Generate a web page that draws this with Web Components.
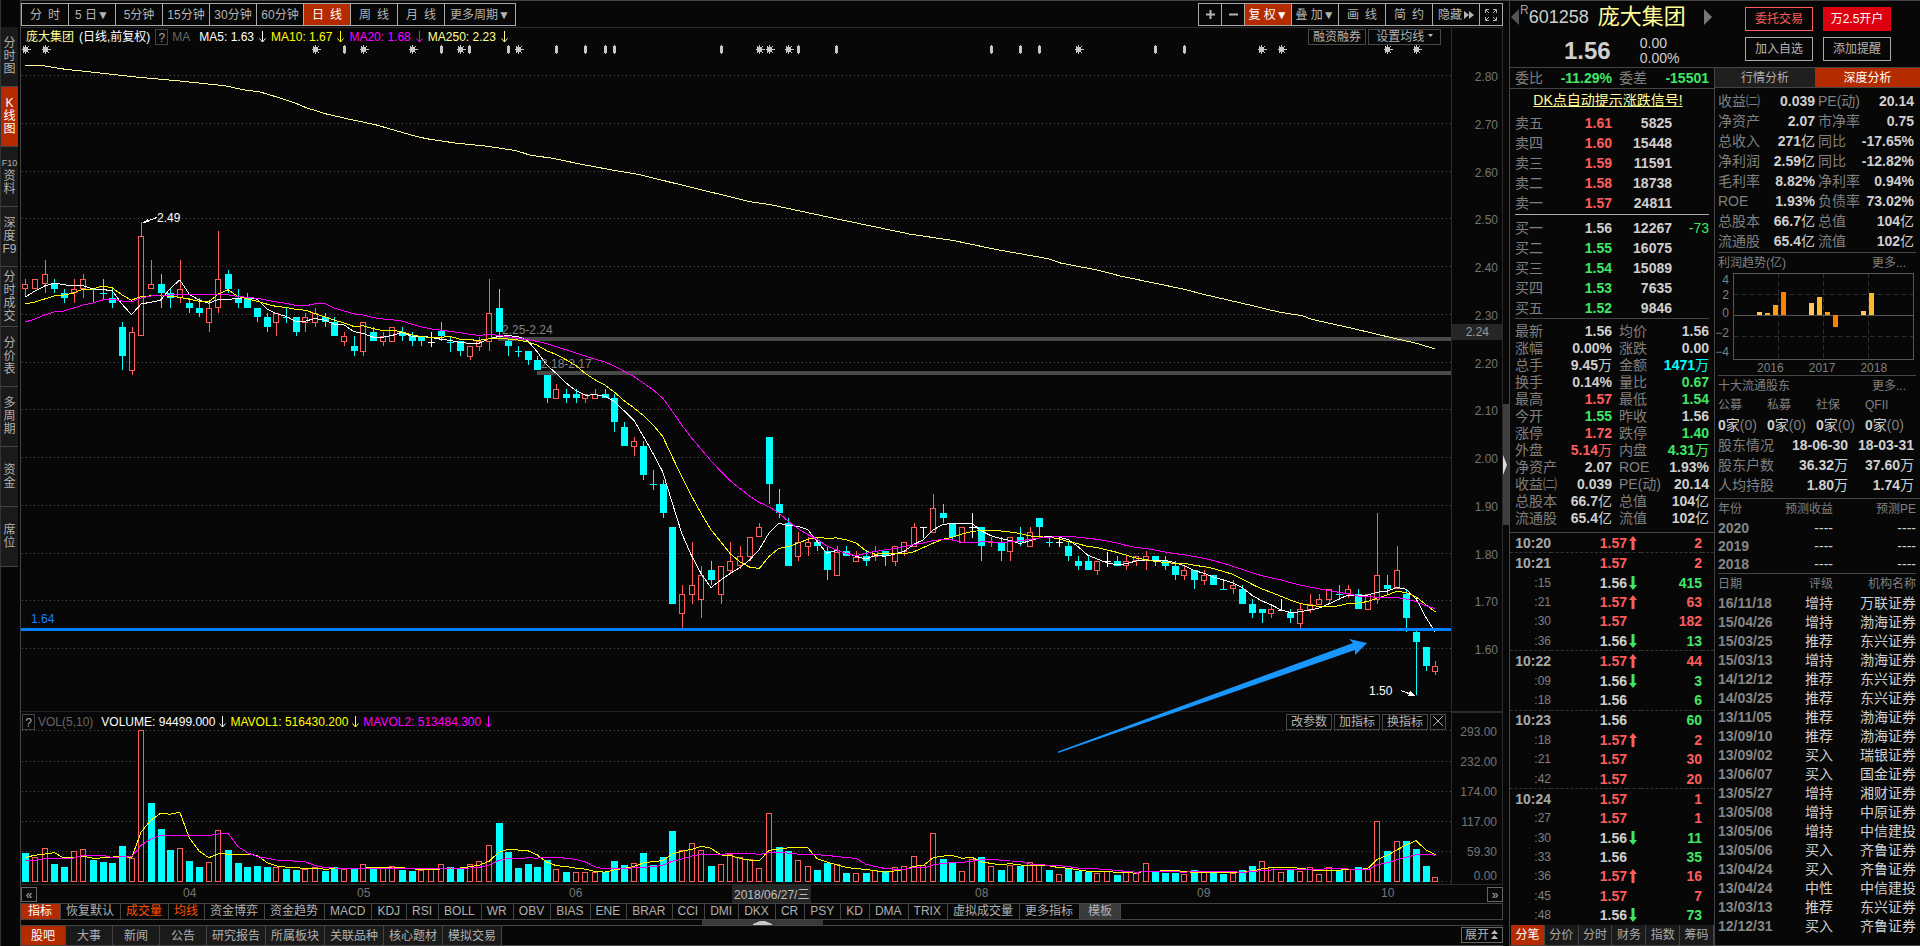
<!DOCTYPE html>
<html lang="zh-CN">
<head>
<meta charset="utf-8">
<title>庞大集团 601258</title>
<style>
html,body{margin:0;background:#070707}
body{font:12px/16px "Liberation Sans","Noto Sans CJK SC",sans-serif;color:#a8a8a8;
--bg:#070707;--line:#3c3c3c;--dim:#808080;--txt:#cfcfcf;--hot:#b42b00;--up:#ff5c5c;--down:#3fe765;--cy:#00ffff;--cream:#ffff99}
</style>
</head>
<body>
<trade-terminal></trade-terminal>
<script>
const BASE = `
*{box-sizing:border-box}
button{font:inherit;color:inherit;background:none;border:0;margin:0;padding:0;white-space:nowrap;cursor:pointer}
a{color:inherit}
table{border-collapse:collapse;width:100%;table-layout:fixed}
th,td{padding:0;font-weight:inherit;text-align:left;white-space:nowrap}
.n{text-align:right;font-weight:bold;color:var(--txt)}
.n i{font-style:normal;font-weight:normal}
.up{color:var(--up)}.dn{color:var(--down)}.cy{color:var(--cy)}
`;
function define(name, css, render) {
  customElements.define(name, class extends HTMLElement {
    constructor() {
      super();
      const root = this.attachShadow({mode: 'open'});
      const tpl = document.createElement('template');
      tpl.innerHTML = `<style>${BASE}${css}</style>${render(this)}`;
      root.append(tpl.content.cloneNode(true));
    }
  });
}
const unit = s => s.replace(/([万亿])/g, '<i>$1</i>');

define('side-nav', `
:host{display:block;background:#070707;padding-top:27px;border-left:1px solid #333}
button{display:flex;width:17px;height:60px;align-items:center;justify-content:center;background:#1a1a1a;border-bottom:1px solid #444;line-height:13px;text-align:center;color:#b0b0b0;white-space:normal}
span{display:block}
.f{font-size:9px}
.on{background:var(--hot);color:#fff}
`, () => ['分 时 图','K 线 图','F10 资 料','深 度 F9','分 时 成 交','分 价 表','多 周 期','资 金','席 位']
  .map((t, i) => `<button class="${i == 1 ? 'on' : ''}"><b style="font-weight:normal">${t.split(' ').map(c => `<span class="${c == 'F10' ? 'f' : ''}">${c}</span>`).join('')}</b></button>`).join(''));

define('tool-bar', `
:host{display:flex;justify-content:space-between;height:28px;padding-top:2px;border-top:1px solid #444;border-bottom:1px solid #2a2a2a}
div{display:flex;height:23px;border:1px solid #aaa;border-right:0}
button{min-width:47px;border-right:1px solid #aaa;color:#b4b4b4}
.s{min-width:23px;font-size:16px}
.w{padding:0 5px}
.on{background:var(--hot);color:#fff}
svg{display:block;margin:auto}
.hd{display:flex;align-items:center;justify-content:center;gap:2px}.hd svg{margin:0}
`, () => `<div>${['分&ensp;时','5 日▼','5分钟','15分钟','30分钟','60分钟','日&ensp;线','周&ensp;线','月&ensp;线'].map((t, i) => `<button class="${i == 6 ? 'on' : ''}">${t}</button>`).join('')}<button class="w">更多周期▼</button></div>
<div><button class="s" aria-label="放大"><svg width="9" height="9"><path d="M4.500 0v9M0 4.500h9" stroke="#b4b4b4" stroke-width="2"/></svg></button><button class="s" aria-label="缩小"><svg width="9" height="9"><path d="M0 4.500h9" stroke="#b4b4b4" stroke-width="2"/></svg></button><button class="on">复 权▼</button><button>叠 加▼</button><button>画&ensp;线</button><button>简&ensp;约</button><button class="hd">隐藏<svg width="10" height="8"><path d="M0 0l5 4-5 4zM5 0l5 4-5 4z" fill="#b4b4b4"/></svg></button><button class="s" aria-label="全屏"><svg width="12" height="12" fill="none" stroke="#b4b4b4"><path d="M.5 4V.5H4M8 .5h3.500V4M.5 8v3.500H4M8 11.500h3.500V8M1 1l3 3M11 1L8 4M1 11l3-3M11 11L8 8"/></svg></button></div>`);

/* Each candle: colour, high, body top, body bottom, low. */
const K = `r279,284,289,297 r279,279,289,289 r260,274,284,293 c279,284,289,293 c289,293,298,303 r279,289,293,303 r274,279,289,298 c289,289,289,302 c279,293,293,298 c289,298,303,308
c322,327,356,370 r327,332,371,375 r222,236,336,336 r260,284,289,289 c274,284,293,308 c289,293,298,308 r260,289,298,303 c298,303,308,313 c298,308,313,317 r300,308,323,332
r231,279,308,313 c270,274,289,293 c289,298,303,308 c293,298,308,308 c308,308,317,322 c313,317,327,332 r313,313,323,336 c308,317,317,322 c317,317,332,336 r313,317,323,332
r308,313,323,327 c313,317,322,327 c317,322,336,336 r332,336,342,346 c336,346,351,356 r322,322,352,356 c327,332,341,341 r332,336,342,346 r327,327,342,342 c327,332,336,341
c332,336,341,346 c336,336,341,346 w332,342,342,346 c322,331,336,341 c336,342,342,351 c341,341,351,356 r346,346,357,360 r337,341,347,351 r279,313,342,351 c289,308,332,336
c340,341,346,356 c346,351,351,356 c351,351,360,365 c356,360,370,370 c375,375,398,403 r384,389,399,399 c389,394,398,403 c389,394,398,403 r394,394,399,403 r389,394,399,399
c389,394,398,398 c394,398,422,432 c422,427,446,446 r437,441,447,456 c441,446,475,480 c470,484,484,489 c480,484,513,518 c527,527,604,604 r585,594,614,628 r542,585,595,604
r566,575,600,618 c561,570,580,585 r566,566,595,604 r542,561,571,574 r546,556,566,569 r537,537,557,561 r523,527,537,537 c437,437,484,504 c489,504,513,518 c518,523,566,566
r532,542,557,561 r537,542,547,556 c537,542,546,551 c546,551,570,580 r546,552,576,576 c546,551,556,556 r551,557,562,562 c551,556,561,566 r546,551,557,561 c551,551,556,566
r546,546,562,566 r542,542,552,556 r523,527,547,547 w527,527,527,537 r494,508,533,533 c504,513,518,523 c523,523,537,541 r527,527,543,543 w513,527,527,537 c527,527,546,561
r537,542,542,546 c537,542,551,561 r537,537,552,561 c527,537,542,546 r527,532,547,547 c518,518,527,537 c537,542,542,546 w537,542,542,546 c541,546,556,561 c556,561,566,570
c556,561,570,570 r561,561,571,575 w552,561,561,566 c556,561,566,566 r556,561,566,570 r556,556,561,566 r551,556,561,570 c556,556,561,566 c556,561,566,570 c561,566,575,580
r566,570,576,580 c570,570,580,589 r570,575,581,585 c575,575,585,585 c580,589,589,589 r580,585,589,594 c585,589,604,604 c599,604,613,618 c609,609,613,623 r604,609,614,618
w599,610,610,610 c609,613,618,623 r604,609,624,628 r594,604,610,613 r594,599,605,605 r589,589,600,604 c585,594,594,599 r585,589,594,598 c589,594,609,609 r594,594,610,610
r513,575,600,604 c575,585,589,594 r546,570,589,589 c589,594,618,632 c631,632,642,695 c647,647,666,671 r661,666,672,675`.split(/\s+/).map(s => [s[0], ...s.slice(1).split(',').map(Number)]);
/* Volume bars: colour and height in thirds of a pixel below the panel's top. */
const V = `c460 r472 r445 c492 c501 r454 r448 c480 c486 c489 c438 r475 r91 c310 c387 c450 r445 c483 c501 r487 r391 c450 c489 c501 c498 c501 r500 c507 c510 r508 r500 c513 c501 r507 c507 r493 c507 r505 r499 c510 c513 r511 r508 r493 c501 c507 r493 r484 r436 c369 c457 c504 c492 c501 c480 r508 c516 r517 r517 r515 c516 c483 c495 r490
c460 c495 c471 c393 r451 r430 r451 c498 r493 r462 r472 r478 r505 r340 c441 c453 r481 r499 c510 c489 r493 c519 r520 c519 r511 c513 r502 r499 r469 r496 r400 c477 c489 r514 r478 c471 r499 c510 r496 c498 r487 r496 c510 r523 c507 c513 c516 r520 r514 c525 r517 r520 r490 c516 c519 c519 r523 c510 r514 c517 c522 r520 c510 c498 r484 r502
r515 c510 r514 r502 r523 r502 c511 r506 c501 r508 r364 c453 r424 c423 c447 c498 r532`.split(/\s+/).map(s => [s[0], 700 + s.slice(1) / 3]);
const COL = {r: '#ff5c5c', c: '#00ffff', w: '#ffffff'};
const X = i => 25.3 + 9.658 * i;
function avg(vals, n, head) {
  return vals.map((v, i) => {
    const y = i < head.length ? head[i] : vals.slice(Math.max(0, i - n + 1), i + 1).reduce((a, b) => a + b) / Math.min(n, i + 1);
    return X(i).toFixed(1) + ',' + y.toFixed(1);
  }).join(' ');
}
function plot() {
  let s = '';
  for (let i = 0; i < 13; i++) s += `<path class="g" d="M22 ${Math.round(75 + i * 47.76) + .5}H1451"/>`;
  for (const y of [730, 761, 791, 821, 851, 881]) s += `<path class="g" d="M22 ${y + .5}H1451"/>`;
  s += '<path stroke="#4a4a4a" stroke-width="4" d="M498 339H1451M537 373H1451"/>';
  K.forEach(([c, h, t, b, l], i) => {
    const x = Math.round(X(i)), k = COL[c];
    if (b - t < 3) s += `<path stroke="${k}" d="M${x + .5} ${h}V${l + 1}M${x - 3} ${t + .5}H${x + 4}"/>`;
    else if (c == 'c') s += `<path stroke="${k}" d="M${x + .5} ${h}V${l}"/><rect x="${x - 3}" y="${t}" width="7" height="${b - t}" fill="${k}"/>`;
    else s += `<path stroke="${k}" fill="none" d="M${x + .5} ${h}V${t}M${x + .5} ${b}V${l}M${x - 2.5} ${t + .5}H${x + 2.5}V${b - .5}H${x - 2.5}z"/>`;
  });
  V.forEach(([c, y], i) => {
    const x = Math.round(X(i)), t = Math.round(y);
    s += c == 'c' ? `<rect x="${x - 3}" y="${t}" width="7" height="${882 - t}" fill="#0ff"/>` :
      `<rect x="${x - 2.5}" y="${t + .5}" width="5" height="${881 - t}" fill="#070707" stroke="#ff5c5c"/>`;
  });
  const close = K.map(k => k[0] == 'c' ? k[3] : k[2]), vol = V.map(v => v[1]);
  const z = a => a.map(v => 700 + v / 3);
  s += `<polyline stroke="#fff" points="${avg(close, 5, [297, 291, 286, 283])}"/>
<polyline stroke="#ff0" points="${avg(close, 10, [304, 302, 299, 296, 295, 293, 289, 289, 286])}"/>
<polyline stroke="#f0f" points="${avg(close, 20, [322, 319, 315, 312, 311, 308, 305, 303, 300, 299, 301, 302, 298, 296, 295, 295, 294, 294, 295])}"/>
<polyline stroke="#ff0" points="${avg(vol, 5, z([472, 466, 462, 458]))}"/>
<polyline stroke="#f0f" points="${avg(vol, 10, z([481, 481, 476, 475, 474, 474, 466, 466, 466]))}"/>`;
  const long = [[[62,196,98,196,130,202,160,208,230,217,325,230,440,243,550,257,600,270,635,275,670,288,725,310,750,323,800,342,850,356,920,374,1010,406,1045,416,1115,429,1195,439,1265,452,1300,466,1350,474,1430,494,1500,510], 0, 2.45],
    [[0,524,95,553,270,605,320,614,480,656,660,702,770,722,870,748,1000,776,1030,789,1120,810,1180,829,1330,867,1380,883,1480,911,1568,937], 640, 2.45], [[185,947,205,958,290,983,394,1016,440,1030,482,1047], 1220, 2.24]];
  s += '<polyline stroke="#ffff99" points="' + long.map(([a, o, k]) => a.map((v, i) => i % 2 ? (v / 3).toFixed(1) : (o + v / k).toFixed(1)).join(' ')).join(' ') + '"/>';
  const sun = [25.5,45.5,315.5,363.5,412.5,460.5,518.5,759.5,769.5,788.5,1078.5,1261.5,1281.5,1387.5,1416.5];
  const dia = [344.5,441.5,469.5,508.5,556.5,585.5,605.5,614.5,721.5,798.5,836.5,991.5,1020.5,1039.5,1155.5,1184.5];
  for (const x of sun) s += `<path stroke="#c8c8c8" d="M${x} 45v9M${x - 4} 49.500h9M${x - 3} 46.500h1M${x + 2} 46.500h1M${x - 3} 52.500h1M${x + 2} 52.500h1"/><rect x="${x - 2.5}" y="47" width="5" height="5" fill="#c8c8c8"/>`;
  for (const x of dia) s += `<path stroke="#c8c8c8" d="M${x} 45v9"/><path stroke="#c8c8c8" stroke-width="3" d="M${x} 46v7"/>`;
  s += `<path stroke="#0080ff" stroke-width="3" d="M21 629.500H1451"/>
<path stroke="#222" d="M21 711.500H1451"/>
<path stroke="#fff" d="M157 217.500L143 222.500M1401 690.500l13 5"/><path fill="#fff" d="M143 223l5-5 1 4zM1415 696l-5-5-2 5z"/>
<path shape-rendering="auto" fill="#1a96ff" d="M1058 751.500L1353 643l-4-4 18 4-12 12v-5L1058 753z"/>`;
  return s;
}
const down = c => `<svg class="a" width="7" height="12" fill="none" stroke="${c}"><path d="M3.500 0v11M.5 7.500l3 3.500 3-3.500"/></svg>`;
const at = (x, y) => `left:${((x - 21) / 14.3).toFixed(3)}%;top:${((y - 28) / 8.56).toFixed(3)}%`;

define('kline-chart', `
:host{display:grid;grid-template:minmax(0,1fr) 19px/minmax(0,1fr) 52px;min-height:0}
.plot{position:relative;min-height:0}
.plot>svg{display:block;width:100%;height:100%;position:absolute;inset:0;fill:none;shape-rendering:crispEdges}
.g{stroke:#505050;stroke-dasharray:1 3}
.note{position:absolute;line-height:14px;color:#fff}
.leg{position:absolute;display:flex;gap:5px;align-items:center;left:5px;height:16px;color:#fff;white-space:nowrap}
.leg.v{left:1px;gap:4px}
.q{width:13px;height:16px;border:1px solid #444;color:#aaa;margin-right:-1px}
.first{margin-left:4px}
.d{color:#666}.y{color:#ff0}.m{color:#f0f}.c{color:var(--cream)}
.btns{position:absolute;display:flex;gap:2px;height:16px}
.btns button{border:1px solid #484848;padding:0 4px;line-height:14px;color:#b4b4b4}
.top{right:10px;top:1px}.btns .x{padding:0 2px}
.axis{display:grid;grid-template-rows:minmax(0,683fr) minmax(0,173fr);border-left:1px solid #2a2a2a;border-right:1px solid #2a2a2a;color:#757575;text-align:right}
.pa{padding:41px 4px 53px 0;display:flex;flex-direction:column;justify-content:space-between;position:relative}
.pa b{position:absolute;left:0;right:0;top:43.400%;height:16px;background:#262626;font-weight:normal;color:#999;padding-right:13px}
.va{border-top:2px solid #2a2a2a;padding:4px 5px 0 0;display:flex;flex-direction:column}
.va span{flex:30 1 0;display:flex;align-items:center;justify-content:flex-end}.va span:last-child{flex-grow:17}
.dates{display:grid;grid-template-columns:162fr 174fr 212fr 163fr 243fr 222fr 184fr 70fr;border-top:1px solid #2a2a2a;color:#757575;line-height:16px}
.dates span{white-space:nowrap}
.dates b{font-weight:normal;background:#262626;color:#c0c0c0;padding:2px 2px 0;display:inline-block}
.pg{width:16px;height:15px;border:1px solid #666;margin-top:2px;display:block;color:#b4b4b4;line-height:10px}
.end{border-top:1px solid #2a2a2a;display:flex;justify-content:flex-end}
`, () => `<div class="plot"><svg viewBox="21 28 1430 856" preserveAspectRatio="none">${plot()}</svg>
<div class="leg" style="top:1px"><span class="c">庞大集团</span><span>(日线,前复权)</span><button class="q">?</button><span class="d">MA</span><span class="first">MA5: 1.63</span>${down('#fff')}<span class="y">MA10: 1.67</span>${down('#ff0')}<span class="m">MA20: 1.68</span>${down('#f0f')}<span class="c">MA250: 2.23</span>${down('#ff9')}</div>
<div class="btns top"><button>融资融券</button><button>&nbsp;设置均线 <svg width="5" height="7"><path d="M0 0h5L2.500 3z" fill="#bbb"/></svg>&nbsp;</button></div>
<span class="note" style="${at(157, 211)}">2.49</span>
<span class="note" style="${at(1369, 684)}">1.50</span>
<span class="note d" style="${at(502, 323)};color:#808080">2.25-2.24</span>
<span class="note d" style="${at(541, 357)};color:#808080">2.18-2.17</span>
<span class="note" style="${at(31, 612)};color:#1080ff">1.64</span>
<div class="leg v" style="top:80.100%"><button class="q">?</button><span class="d">VOL(5,10)</span><span class="first">VOLUME: 94499.000</span>${down('#fff')}<span class="y">MAVOL1: 516430.200</span>${down('#ff0')}<span class="m">MAVOL2: 513484.300</span>${down('#f0f')}</div>
<div class="btns" style="right:5px;top:80.100%"><button>改参数</button><button>加指标</button><button>换指标</button><button class="x" aria-label="关闭"><svg width="10" height="10" stroke="#b4b4b4"><path d="M0 0l10 10M10 0L0 10"/></svg></button></div>
</div>
<div class="axis"><div class="pa">${['2.80','2.70','2.60','2.50','2.40','2.30','2.20','2.10','2.00','1.90','1.80','1.70','1.60'].map(t => `<span>${t}</span>`).join('')}<b>2.24</b></div>
<div class="va">${['293.00','232.00','174.00','117.00','59.30','0.00'].map(t => `<span>${t}</span>`).join('')}</div></div>
<div class="dates"><button class="pg">«</button><span>04</span><span>05</span><span>06</span><span><b>2018/06/27/三</b></span><span>08</span><span>09</span><span>10</span></div>
<div class="end"><button class="pg">»</button></div>`);

define('indicator-bar', `
:host{display:block}
.r{display:flex;height:17px;border:1px solid #444;border-left:0}
.r button{padding:0 6px 0 5px;border-right:1px solid #444;line-height:15px;color:#b0b0b0}
.r .on,.b .on{background:var(--hot);color:#fff}.r .hl{color:#ff5000}.r .tm{background:#3a3a3a;padding:0 8px}
.r .on,.r .tm{min-width:40px}
.split{height:5px;display:flex}
.split i{margin-left:681px;width:121px;background:#3a3a3a;text-align:center;display:block}
svg{display:block;margin:auto}
.b{display:flex;height:21px;border-top:1px solid #444;border-bottom:1px solid #444}
.b button{min-width:47px;background:#1a1a1a;border-right:1px solid #444;padding:0 5px;color:#b0b0b0}
.b .on{min-width:45px}
.b .ex{margin-left:auto;background:none;border:1px solid #666;height:16px;line-height:14px;margin-top:1px;padding:0 3px;min-width:42px;display:flex;align-items:center;gap:2px}
.ex svg{margin:0}
`, () => `<div class="r">${['指标','恢复默认','成交量','均线','资金博弈','资金趋势','MACD','KDJ','RSI','BOLL','WR','OBV','BIAS','ENE','BRAR','CCI','DMI','DKX','CR','PSY','KD','DMA','TRIX','虚拟成交量','更多指标','模板']
  .map((t, i) => `<button class="${i == 0 ? 'on' : i == 2 || i == 3 ? 'hl' : i == 25 ? 'tm' : ''}">${t}</button>`).join('')}</div>
<div class="split"><i><svg width="19" height="5"><path d="M0 5V4L7 1h5l7 3v1z" fill="#c8c8c8"/></svg></i></div>
<div class="b">${['股吧','大事','新闻','公告','研究报告','所属板块','关联品种','核心题材','模拟交易'].map((t, i) => `<button class="${i ? '' : 'on'}">${t}</button>`).join('')}<button class="ex">展开<svg width="7" height="10"><path d="M0 4h7L3.500 0zM0 9h7L3.500 5z" fill="#bbb"/></svg></button></div>`);

define('stock-header', `
:host{display:grid;grid-template-columns:235px 1fr;height:66px;color:var(--txt)}
.id{display:flex;align-items:center;height:32px;font-size:18px;padding-left:1px}
sup{font-size:12px;line-height:12px;align-self:flex-start;margin:3px 0 0 1px;color:#a0a0a0}
h1{margin:0 0 0 9px;font-size:22px;font-weight:normal;color:var(--cream);width:106px}
.px{display:flex;padding-left:54px;gap:29px;align-items:center;height:34px;font-size:14px;line-height:15px}
.px b{font-size:24px}
.px span{padding-top:2px}
.bt{display:grid;grid-template:24px 24px/68px 68px;gap:6px 10px;padding-top:6px}
.bt button{border:1px solid #aaa;color:#b4b4b4}
.bt .tr{border-color:var(--up);color:var(--up)}.bt .op{background:#dc0010;border-color:#dc0010;color:#fff}
`, () => `<div><div class="id"><svg width="8" height="16"><path d="M8 0v16L0 8z" fill="#555"/></svg><sup>R</sup><span>601258</span><h1>庞大集团</h1><svg width="8" height="16"><path d="M0 0v16l8-8z" fill="#777"/></svg></div>
<div class="px"><b>1.56</b><span>0.00<br>0.00%</span></div></div>
<div class="bt"><button class="tr">委托交易</button><button class="op">万2.5开户</button><button>加入自选</button><button>添加提醒</button></div>`);

const book = rows => `<table class="bk"><colgroup><col style="width:40px"><col style="width:57px"><col style="width:60px"><col></colgroup>${rows.map(([l, p, v, c, d]) => `<tr><th>${l}</th><td class="n ${c}">${p}</td><td class="n">${v}</td><td class="dlt">${d || ''}</td></tr>`).join('')}</table>`;
const T = [['10:20','1.57','u',2,'r'],['10:21','1.57','r',2,'r'],[':15','1.56','d',415,'g'],[':21','1.57','u',63,'r'],[':30','1.57','r',182,'r'],[':36','1.56','d',13,'g'],['10:22','1.57','u',44,'r'],[':09','1.56','d',3,'g'],[':18','1.56','w',6,'g'],['10:23','1.56','w',60,'g'],[':18','1.57','u',2,'r'],[':21','1.57','r',30,'r'],[':42','1.57','r',20,'r'],['10:24','1.57','r',1,'r'],[':27','1.57','r',1,'r'],[':30','1.56','d',11,'g'],[':33','1.56','w',35,'g'],[':36','1.57','u',16,'r'],[':45','1.57','r',7,'r'],[':48','1.56','d',73,'g']];
const arrow = k => k == 'u' ? '<svg width="8" height="14"><path d="M4 0L0 5h2.500v9h3V5H8z" fill="#ff5c5c"/></svg>' : k == 'd' ? '<svg width="8" height="14"><path d="M4 14L0 9h2.500V0h3v9H8z" fill="#3fe765"/></svg>' : '';

define('quote-panel', `
:host{display:flex;flex-direction:column;font-size:14px;color:var(--dim);min-height:0}
.wb{border-bottom:1px solid #444;height:21px;line-height:20px;padding:0 5px}
.wb .n{color:var(--down)}
.dk{height:24px;text-align:center;color:var(--cream);line-height:22px;padding-right:8px}
.box{padding:0 5px}
.bk tr{height:20px;line-height:20px}
.dlt{text-align:right;color:var(--down)}
hr{border:0;border-top:1px solid #444;margin:0 5px;width:auto}
hr.l{border-color:#aaa;margin:1px 5px 3px}
.st{margin:4px 0 5px}.st tr{height:17px;line-height:17px}
.st th+td+th,.wb th+td+th{padding-left:7px}
.tk{flex:1;border-top:1px solid #444;min-height:340px}
.tk table{height:100%}
.tk th{text-align:right;font-size:12px}.tk .h th{font-size:14px;font-weight:bold;color:#a8a8a8}
.tk .h td,.tk .h th{border-top:1px dashed #333}.tk tr:first-child>*{border-top:0!important}
.tk td{line-height:16px}.tk svg{display:block;margin-left:2px}
.tk .up{color:var(--up)}.tk .dn{color:var(--down)}
.tabs{display:flex;height:21px;border-bottom:1px solid #444;font-size:12px;padding-left:1px}
.tabs button{flex:1;background:#1a1a1a;border-right:1px solid #444;color:#a8a8a8}
.tabs .on{background:var(--hot);color:#fff}
`, () => `<div class="wb"><table><colgroup><col style="width:40px"><col style="width:57px"><col style="width:40px"><col></colgroup><tr><th>委比</th><td class="n">-11.29%</td><th>委差</th><td class="n">-15501</td></tr></table></div>
<div class="dk"><a href="#dk">DK点自动提示涨跌信号!</a></div>
<div class="box">${book([['卖五','1.61',5825,'up'],['卖四','1.60',15448,'up'],['卖三','1.59',11591,'up'],['卖二','1.58',18738,'up'],['卖一','1.57',24811,'up']])}</div><hr class="l">
<div class="box">${book([['买一','1.56',12267,'','-73'],['买二','1.55',16075,'dn'],['买三','1.54',15089,'dn'],['买四','1.53',7635,'dn'],['买五','1.52',9846,'dn']])}</div><hr>
<div class="box"><table class="st"><colgroup><col style="width:43px"><col style="width:54px"><col style="width:50px"><col></colgroup>${[
['最新','1.56','','均价','1.56',''],['涨幅','0.00%','','涨跌','0.00',''],['总手','9.45万','','金额','1471万','cy'],['换手','0.14%','','量比','0.67','dn'],['最高','1.57','up','最低','1.54','dn'],['今开','1.55','dn','昨收','1.56',''],['涨停','1.72','up','跌停','1.40','dn'],['外盘','5.14万','up','内盘','4.31万','dn'],['净资产','2.07','','ROE','1.93%',''],['收益㈡','0.039','','PE(动)','20.14',''],['总股本','66.7亿','','总值','104亿',''],['流通股','65.4亿','','流值','102亿','']]
.map(([a, b, c, d, e, f]) => `<tr><th>${a}</th><td class="n ${c}">${unit(b)}</td><th>${d}</th><td class="n ${f}">${unit(e)}</td></tr>`).join('')}</table></div>
<div class="tk"><table><colgroup><col style="width:41px"><col style="width:76px"><col style="width:14px"><col style="width:61px"><col></colgroup>${T.map(([t, p, k, v, c]) => `<tr class="${t[0] == ':' ? '' : 'h'}"><th>${t}</th><td class="n ${k == 'u' || k == 'r' ? 'up' : ''}">${p}</td><td>${arrow(k)}</td><td class="n ${c == 'r' ? 'up' : 'dn'}">${v}</td><td></td></tr>`).join('')}</table></div>
<div class="tabs">${['分笔','分价','分时','财务','指数','筹码'].map((t, i) => `<button class="${i ? '' : 'on'}">${t}</button>`).join('')}</div>`);

define('depth-panel', `
:host{display:block;font-size:14px;color:var(--dim);border-left:1px solid #444;border-bottom:1px solid #444}
.tabs{display:grid;grid-template-columns:100px 1fr;height:20px;font-size:12px;border-bottom:1px solid #444;margin-bottom:3px}
.tabs button{background:#1f1f1f;color:#b0b0b0}.tabs .on{background:var(--hot);color:#fff}
.p{padding:0 6px 0 3px}
.f tr{height:20px;line-height:20px}.f th+td+th{padding-left:3px}
hr{border:0;border-top:1px solid #444;margin:1px 4px 0 3px}
.t{display:flex;justify-content:space-between;font-size:12px;line-height:20px;height:19px;padding:0 14px 0 3px}
.pf{display:grid;grid-template:88px 14px/18px 180px;font-size:12px}
.pf .y{display:grid;grid-template-rows:15px 18px 20px 19px 16px;text-align:right;padding-right:4px;line-height:16px}
.pf svg{display:block;shape-rendering:crispEdges}
.pf .x{grid-column:2;display:flex;gap:25px;padding-left:24px;line-height:16px;color:#808080}
.h tr{height:20px;line-height:20px}.h .a{font-size:12px}.h b,.s b{color:var(--txt)}
.h,.s{margin-right:0}.s .n i{font-weight:normal}
.e tr{height:18px;line-height:18px}.r tr{height:19px;line-height:19px}
.e tr:first-child,.r tr:first-child{font-size:12px;height:20px;line-height:20px}
.e b,.r b{color:#858585}
.q{padding:0 4px 0 3px}
.q td,.q th{text-align:right}.q th:first-child,.q td:first-child{text-align:left}
.q td+td{color:var(--txt)}
a{text-decoration:none}
`, () => `<div class="tabs"><button>行情分析</button><button class="on">深度分析</button></div>
<div class="p"><table class="f"><colgroup><col style="width:42px"><col style="width:55px"><col style="width:45px"><col></colgroup>${[
['收益㈡','0.039','PE(动)','20.14'],['净资产','2.07','市净率','0.75'],['总收入','271亿','同比','-17.65%'],['净利润','2.59亿','同比','-12.82%'],['毛利率','8.82%','净利率','0.94%'],['ROE','1.93%','负债率','73.02%'],['总股本','66.7亿','总值','104亿'],['流通股','65.4亿','流值','102亿']]
.map(([a, b, c, d]) => `<tr><th>${a}</th><td class="n">${unit(b)}</td><th>${c}</th><td class="n">${unit(d)}</td></tr>`).join('')}</table></div><hr>
<div class="t"><span>利润趋势(亿)</span><a href="#profit">更多...</a></div>
<div class="pf"><div class="y"><span>4</span><span>2</span><span>0</span><span>−2</span><span>−4</span></div>
<svg width="181" height="88" viewBox="1733 271 181 88" fill="none"><path stroke="#2e2e2e" stroke-dasharray="5 3" d="M1734 293.500h179M1734 335.500h179M1778.500 272v86M1823.500 272v86M1868.500 272v86"/><path stroke="#555" d="M1733.500 272.500h180v86h-180zM1733 314.500h181"/>${
[[1757,311,314,'#ffc860'],[1765,312,314,'#ffb030'],[1773,304,314,'#ff9f10'],[1781,291,314,'#ff8000'],[1809,302,314,'#ffc860'],[1817,296,314,'#ffb82a'],[1825,311,314,'#ff9f10'],[1833,314,326,'#ff8000'],[1861,310,314,'#ffc860'],[1869,292,314,'#ffb82a']].map(([x, a, b, c]) => `<rect x="${x}" y="${a}" width="5" height="${b - a}" fill="${c}"/>`).join('')}</svg>
<div class="x"><span>2016</span><span>2017</span><span>2018</span></div></div><hr>
<div class="t"><span>十大流通股东</span><a href="#holders">更多...</a></div>
<div class="p"><table class="h"><tr class="a"><th>公募</th><th>私募</th><th>社保</th><th>QFII</th></tr><tr>${'<td><b>0</b><span style="color:#cfcfcf">家</span>(0)</td>'.repeat(4)}</tr></table>
<table class="f"><colgroup><col style="width:64px"><col style="width:66px"><col></colgroup>${[['股东情况','18-06-30','18-03-31'],['股东户数','36.32万','37.60万'],['人均持股','1.80万','1.74万']].map(([a, b, c]) => `<tr><th>${a}</th><td class="n">${unit(b)}</td><td class="n">${unit(c)}</td></tr>`).join('')}</table></div><hr style="margin:3px 0 0">
<div class="q"><table class="e"><colgroup><col style="width:54px"><col style="width:61px"><col></colgroup><tr><th>年份</th><th>预测收益</th><th>预测PE</th></tr>${[2020, 2019, 2018].map(y => `<tr><td><b>${y}</b></td><td>----</td><td>----</td></tr>`).join('')}</table></div><hr style="margin-top:0">
<div class="q"><table class="r"><colgroup><col style="width:64px"><col style="width:51px"><col></colgroup><tr><th>日期</th><th>评级</th><th>机构名称</th></tr>${`16/11/18 增持 万联证券|15/04/26 增持 渤海证券|15/03/25 推荐 东兴证券|15/03/13 增持 渤海证券|14/12/12 推荐 东兴证券|14/03/25 推荐 东兴证券|13/11/05 推荐 渤海证券|13/09/10 推荐 渤海证券|13/09/02 买入 瑞银证券|13/06/07 买入 国金证券|13/05/27 增持 湘财证券|13/05/08 增持 中原证券|13/05/06 增持 中信建投|13/05/06 买入 齐鲁证券|13/04/24 买入 齐鲁证券|13/04/24 中性 中信建投|13/03/13 推荐 东兴证券|12/12/31 买入 齐鲁证券`.split('|').map(l => { const [a, b, c] = l.split(' '); return `<tr><td><b>${a}</b></td><td>${b}</td><td>${c}</td></tr>`; }).join('')}</table></div>`);

define('trade-terminal', `
:host{display:grid;grid-template-columns:20px minmax(0,1fr) 6px 411px;height:100vh;min-height:940px;background:var(--bg)}
main{display:flex;flex-direction:column;border-left:1px solid #444;min-width:0}
kline-chart{flex:1}
.sp{display:flex;flex-direction:column;justify-content:center;border-top:1px solid #444;padding-bottom:18px}
.sp i{display:flex;align-items:center;height:121px;background:#3e3e3e}
aside{border-left:1px solid #444;border-top:1px solid #444;display:flex;flex-direction:column;min-height:0}
.cols{display:grid;grid-template-columns:204px 1fr;border-top:1px solid #444;flex:1;min-height:0}
`, () => `<side-nav></side-nav><main><tool-bar></tool-bar><kline-chart></kline-chart><indicator-bar></indicator-bar></main>
<div class="sp"><i><svg width="4" height="20"><path d="M0 0l4 10-4 10z" fill="#ddd"/></svg></i></div>
<aside><stock-header></stock-header><div class="cols"><quote-panel></quote-panel><depth-panel></depth-panel></div></aside>`);
</script>
</body>
</html>
